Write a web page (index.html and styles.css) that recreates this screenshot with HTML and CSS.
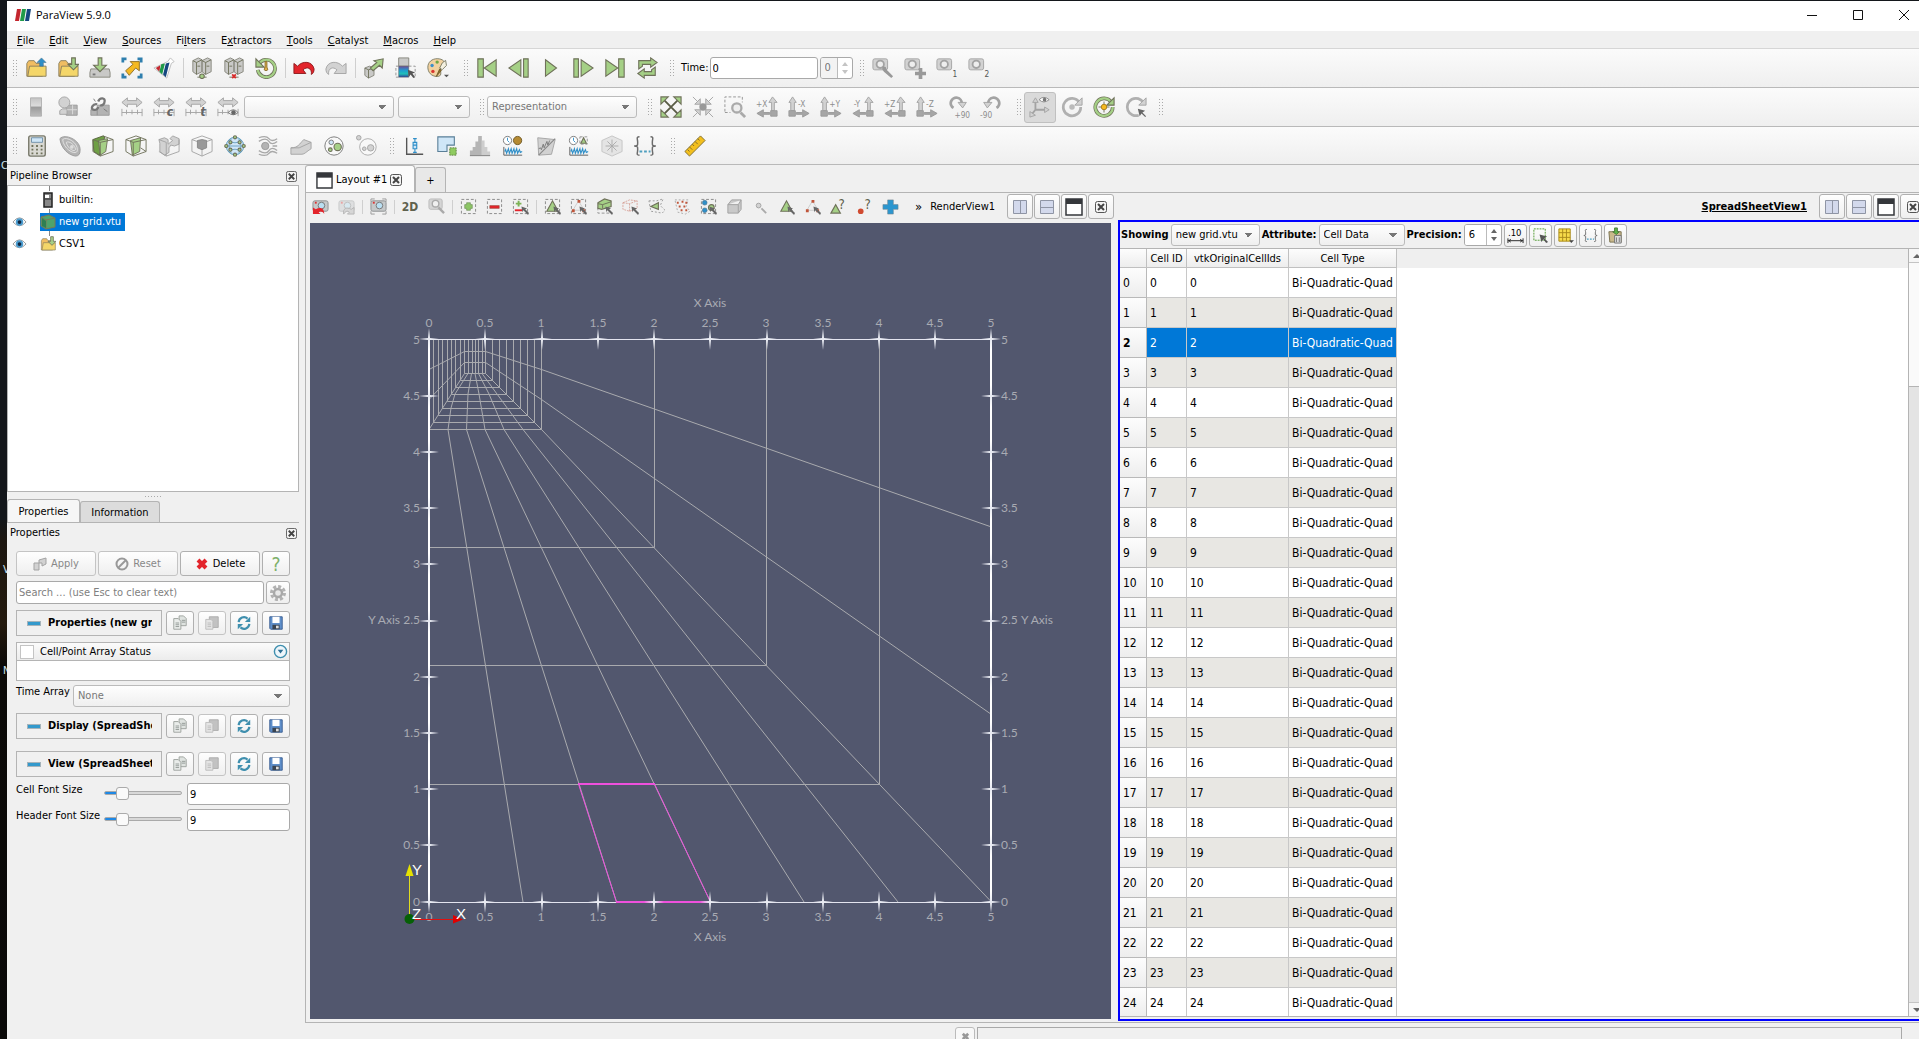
FILE: index.html
```html
<!DOCTYPE html>
<html lang="en">
<head>
<meta charset="utf-8">
<title>ParaView 5.9.0</title>
<link rel="stylesheet" href="styles.css">
</head>
<body>
<svg class="defs" aria-hidden="true">
  <defs>
    <linearGradient id="rainbow" x1="0" y1="0" x2="0" y2="1"><stop offset="0" stop-color="#6a4b9a"/><stop offset=".4" stop-color="#1f9fd0"/><stop offset=".7" stop-color="#1fc0b8"/><stop offset="1" stop-color="#2f3f9a"/></linearGradient>
    <linearGradient id="fade" x1="0" y1="0" x2="0" y2="1"><stop offset="0" stop-color="#c4c4c4"/><stop offset=".45" stop-color="#dcdcdc"/><stop offset=".5" stop-color="#9a9a9a"/><stop offset="1" stop-color="#bcbcbc"/></linearGradient>
    <path id="star" fill="#e9ebf3" d="M12 1L13 11 22 12 13 13 12 23 11 13 2 12 11 11z"/>
  </defs>
  <symbol id="logo" viewBox="0 0 16 14"><path fill="#c4262e" d="M2 1h4L4 13H0z"/><path fill="#1f9a49" d="M7 1h4L9 13H5z"/><path fill="#15477f" d="M12 1h4l-2 12h-4z"/></symbol>
  <symbol id="folder-up" viewBox="0 0 24 24"><path class="or" d="M2 21V7l2-3h6l2 3h7v14z"/><path class="yl" d="M5 10h18v11H3z"/><path class="bl" d="M18 1l5 5h-3v4h-4V6h-3z"/></symbol>
  <symbol id="folder-down" viewBox="0 0 24 24"><path class="or" d="M2 21V7l2-3h6l2 3h7v14z"/><path class="yl" d="M5 10h18v11H3z"/><path class="gn" d="M16 1h4v7h4l-6 6-6-6h4z"/></symbol>
  <symbol id="save" viewBox="0 0 24 24"><path class="gd" d="M2 13h20l1 4v5H1v-5z"/><path class="gn" d="M10 1h4v8h5l-7 7-7-7h5z"/><path fill="#777" d="M4 18h3v2H4z"/></symbol>
  <symbol id="extract-data" viewBox="0 0 24 24"><path class="cb" d="M2 6V2h4M18 2h4v4M22 18v4h-4M6 22H2v-4"/><path fill="#f5b921" stroke="#8a6d28" d="M5 15l8-7-3-3h10v10l-4-3-7 8z"/></symbol>
  <symbol id="flask" viewBox="0 0 24 24"><path fill="#fff" stroke="#bbb" d="M19 1l4 4-3 2-5 16L1 12l15-7z"/><path fill="#c4262e" d="M3 12l5-3-1 7z"/><path fill="#1f9a49" d="M9 8l4-1-3 12-3-3z"/><path fill="#15477f" d="M14 7l4-1-4 16-3-3z"/></symbol>
  <symbol id="server" viewBox="0 0 24 24"><path class="gd" d="M2 4l6-3 4 2v13l-6 3-4-3zM12 4l6-3 4 2v13l-6 3-4-3z"/><path class="ol" d="M2 4l4 2 6-3M6 6v13M12 4l4 2 6-3M16 6v13M7 10h3M17 10h3M7 22h10"/></symbol>
  <symbol id="connect" viewBox="0 0 24 24"><use href="#server"/><circle class="gn" cx="12" cy="21" r="2.500"/></symbol>
  <symbol id="disconnect" viewBox="0 0 24 24"><use href="#server"/><path stroke="#d92b2b" stroke-width="2" d="M10 19l4 4m0-4l-4 4"/></symbol>
  <symbol id="reset-session" viewBox="0 0 24 24"><path fill="none" stroke="#6f715a" stroke-width="4" d="M4 8a9.500 9.500 0 1 1-1 6"/><path fill="none" stroke="#a5d086" stroke-width="2.500" d="M4 8a9.500 9.500 0 1 1-1 6"/><path class="gn" d="M1 2v9h9z"/><path fill="#e0b04a" stroke="#8a6d28" d="M11 5h2v6l1 3-2 1-2-1 1-3z"/></symbol>
  <symbol id="undo" viewBox="0 0 24 24"><path fill="#e3242b" stroke="#8c1a1c" d="M1 18V7l4 3C10 4 21 4 23 13c0 3-1 5-3 6 1-7-5-9-9-5l3 4z"/></symbol>
  <symbol id="redo" viewBox="0 0 24 24"><path class="gy" d="M23 18V7l-4 3C14 4 3 4 1 13c0 3 1 5 3 6-1-7 5-9 9-5l-3 4z"/></symbol>
  <symbol id="extrude" viewBox="0 0 24 24"><path class="gd" d="M2 12l5-2 5 2v8l-6 3-4-3z"/><path class="ol" d="M2 12l4 2 6-2M6 14v9"/><path class="gn" d="M8 12l7-6-3-2 10-2-1 10-3-3-7 6z"/></symbol>
  <symbol id="color-map" viewBox="0 0 24 24"><path class="gd" d="M4 1h11v9H4z"/><path fill="url(#rainbow)" stroke="#555" stroke-width=".5" d="M4 10h11v12H4z"/><path class="ds" d="M4 22H1V10h3M15 10h7v12"/><path fill="#555" d="M14 14l8 3-3 1 3 4-2 1-3-4-2 3z"/></symbol>
  <symbol id="palette" viewBox="0 0 26 24"><path fill="#f2d2a0" stroke="#6f715a" d="M12 1c7 0 10 4 9 8-1 3-5 2-5 5s2 8-4 8C5 22 1 17 1 11 1 5 6 1 12 1z"/><circle fill="#d8352f" cx="7" cy="16" r="2"/><circle fill="#3f8fc9" cx="6" cy="9" r="2"/><circle fill="#70a844" cx="12" cy="5" r="2"/><path fill="#f4f0e0" stroke="#6f715a" d="M22 3l1 6-5 5-3-2 3-6z"/><path fill="#8a6d28" stroke="#6f5a28" d="M15 13l2 2-6 7z"/><path fill="#555" d="M20 20h6l-3 3z"/></symbol>
  <symbol id="first" viewBox="0 0 24 24"><path class="gn" d="M2 2h6v20H2zM22 3v18L9 12z"/></symbol>
  <symbol id="previous" viewBox="0 0 24 24"><path class="gn" d="M14 3v18L1 12zM17 2h5v20h-5z"/></symbol>
  <symbol id="play" viewBox="0 0 24 24"><path class="gn" d="M6 3l12 9L6 21z"/></symbol>
  <symbol id="next" viewBox="0 0 24 24"><path class="gn" d="M10 3v18l13-9zM2 2h5v20H2z"/></symbol>
  <symbol id="last" viewBox="0 0 24 24"><path class="gn" d="M2 3v18l13-9zM16 2h6v20h-6z"/></symbol>
  <symbol id="loop" viewBox="0 0 24 24"><path class="gn" d="M3 13V4h13V1l7 5-7 5V8H7v2zM21 11v9H9v3l-7-5 7-5v3h8v-2z"/></symbol>
  <symbol id="cam" viewBox="0 0 24 24"><rect class="gy" x="1" y="2" width="16" height="12" rx="2"/><circle fill="#eee" stroke="#a3a3a3" stroke-width="2" cx="9" cy="8" r="4"/></symbol>
  <symbol id="cam-tool" viewBox="0 0 24 24"><use href="#cam"/><path fill="#999" d="M12 10l3 1 1 3 7 7-2 2-8-7-2-3z"/></symbol>
  <symbol id="cam-add" viewBox="0 0 24 24"><use href="#cam"/><path fill="#999" d="M16 12h4v4h4v4h-4v4h-4v-4h-4v-4h4z"/></symbol>
  <symbol id="legend" viewBox="0 0 24 24"><path fill="url(#fade)" stroke="#b0b0b0" d="M6 2h12v20H6z"/></symbol>
  <symbol id="edit-colors" viewBox="0 0 24 24"><path class="gk" d="M10 10h12v11H10z"/><path class="gy" d="M6 14h5v6H3v-4z"/><circle class="gy" cx="8" cy="7" r="6"/><path stroke="#ddd" d="M17 10v10M11 15h11"/></symbol>
  <symbol id="unlink" viewBox="0 0 24 24"><path class="gk" d="M9 10h13v11H9zM2 15h7v6H2z"/><path fill="none" stroke="#777" stroke-width="2.500" d="M10 6c2-5 8-4 7 0 0 3-3 5-5 4M9 9c-5-1-8 5-4 6 3 1 5-2 5-3"/><path stroke="#777" d="M5 3l2 3M16 14l4 3"/></symbol>
  <symbol id="range" viewBox="0 0 24 24"><path class="gy" d="M1 7l6-5v3h10V2l6 5-6 5V9H7v3z"/><path class="gl" d="M1 14v8M6 15v5M12 15v5M18 15v5M23 14v8M1 18h22"/></symbol>
  <symbol id="range-v" viewBox="0 0 24 24"><use href="#range"/><path fill="#eee" stroke="#777" d="M12 18q6-6 11 0-5 5-11 0z"/><circle fill="#666" cx="18" cy="18" r="2.500"/></symbol>
  <symbol id="fit" viewBox="0 0 24 24"><path fill="none" stroke="#5a5c46" stroke-width="2" d="M4 4l16 16M20 4L4 20"/><path class="gn" d="M1 1h8L1 9zM23 1h-8l8 8zM1 23h8l-8-8zM23 23h-8l8-8z"/></symbol>
  <symbol id="fit-data" viewBox="0 0 24 24"><path class="gl" d="M1 1l5 5M23 1l-5 5M1 23l5-5M23 23l-5-5"/><path class="gy" d="M9 9V3L3 9zM15 9V3l6 6zM9 15v6l-6-6zM15 15v6l6-6z"/><circle fill="#999" cx="12" cy="12" r="4"/></symbol>
  <symbol id="zoom-box" viewBox="0 0 24 24"><path class="ds" d="M1 17V1h19v6M1 18h6"/><circle fill="#eee" stroke="#aaa" stroke-width="2.500" cx="14" cy="13" r="5"/><path stroke="#aaa" stroke-width="3" d="M18 18l5 5"/></symbol>
  <symbol id="ax-l" viewBox="0 0 24 24"><path class="gy" d="M17 16V7h-3l4-6 5 6h-3v9z"/><path fill="#a6a6a6" stroke="#999" d="M16 16h7v6h-7zM15 18H8v-3l-7 4 7 4v-3h7z"/></symbol>
  <symbol id="ax-r" viewBox="0 0 24 24"><path class="gy" d="M3 16V7H1l4-6 4 6H7v9z"/><path fill="#a6a6a6" stroke="#999" d="M1 16h7v6H1zM9 18h7v-3l7 4-7 4v-3H9z"/></symbol>
  <symbol id="rot-p" viewBox="0 0 24 24"><path fill="none" stroke="#a3a3a3" stroke-width="3" d="M6 13a6 6 0 1 1 9-5"/><path class="gy" d="M11 7h9l-4 6z"/></symbol>
  <symbol id="rot-m" viewBox="0 0 24 24"><path fill="none" stroke="#a3a3a3" stroke-width="3" d="M18 13a6 6 0 1 0-9-5"/><path class="gy" d="M13 7H4l4 6z"/></symbol>
  <symbol id="axes-eye" viewBox="0 0 24 24"><path fill="none" stroke="#a3a3a3" stroke-width="2" d="M7 15V5M7 15h11M7 15l-4 5"/><path class="gy" d="M4 7l3-5 3 5zM17 12l5 3-5 3zM1 17v6l6-2z"/><path fill="#fff" stroke="#888" d="M11 4q5-5 11 0-6 5-11 0z"/><circle fill="#777" cx="17" cy="4" r="2"/></symbol>
  <symbol id="center-show" viewBox="0 0 24 24"><path class="ring" d="M20 7a9.500 9.500 0 1 0 1.500 5"/><path class="gy" d="M23 2v8h-8z"/><circle fill="#bbb" cx="12" cy="12" r="3"/></symbol>
  <symbol id="center-reset" viewBox="0 0 24 24"><path fill="none" stroke="#6f715a" stroke-width="4" d="M20 7a9.500 9.500 0 1 0 1.500 5"/><path fill="none" stroke="#a5d086" stroke-width="2.500" d="M20 7a9.500 9.500 0 1 0 1.500 5"/><path class="gn" d="M23 2v8h-8z"/><path stroke="#6f715a" d="M12 6v12M6 12h12"/><circle fill="#f5b921" stroke="#a87d18" cx="12" cy="12" r="3"/></symbol>
  <symbol id="center-pick" viewBox="0 0 24 24"><path class="ring" d="M20 7a9.500 9.500 0 1 0-5 14"/><path class="gy" d="M23 2v8h-8z"/><path fill="#666" d="M14 14l8 2-3 2 4 4-1 1-4-4-2 3z"/></symbol>
  <symbol id="calc" viewBox="0 0 24 24"><rect fill="#d9d9d3" stroke="#77786a" stroke-width="1.500" x="3" y="1" width="18" height="22" rx="2"/><path fill="#cfe6f7" stroke="#6f8fa8" d="M6 3h12v5H6z"/><path stroke="#6f715a" stroke-width="2" stroke-dasharray="2 3" d="M6 12h12M6 16h12M6 20h12"/></symbol>
  <symbol id="contour" viewBox="0 0 24 24"><path class="gk" d="M1 4c5-6 23 1 22 13 0 4-2 6-5 6C10 22 2 14 1 4z"/><path fill="none" stroke="#e4e4e4" d="M4 5c4-4 17 3 16 12-1 6-15-1-16-12zM8 8c3-2 10 3 10 8-2 3-9-2-10-8z"/><circle fill="#ddd" cx="14" cy="13" r="2"/></symbol>
  <symbol id="clip" viewBox="0 0 24 24"><path fill="#6f9f45" stroke="#55623c" d="M1 5l11-4 2 1-6 20-6-4z"/><path fill="#a5d086" stroke="#6f715a" d="M7 6l10-2-2 14-6 4z"/><path class="ol" d="M1 5l8 3 14-3-11-4M9 8v15l14-5V5M9 23l-8-5V5"/></symbol>
  <symbol id="slice" viewBox="0 0 24 24"><path fill="#a5d086" stroke="#6f715a" d="M6 6l11-3-1 15-8 4z"/><path class="ol" d="M1 5l8 3 14-3-11-4zM9 8v15l14-5V5M9 23l-8-5V5M17 14l6 4"/></symbol>
  <symbol id="threshold" viewBox="0 0 24 24"><path class="gy" d="M1 5l6-2 4 2v5l5-4-3-2 3-3 7 3v6l-5 2-4-1-2 3v5l-5 3-5-4V9z"/><path class="gl" d="M1 18l8 5 14-5V5M9 8v15M1 5l8 3"/></symbol>
  <symbol id="subset" viewBox="0 0 24 24"><path class="gl" d="M12 1l11 4v13l-11 5-11-5V5zM1 5l11 4 11-4M12 9v14"/><path fill="#999" stroke="#888" d="M7 6l5-1 5 1v8l-5 2-5-2z"/></symbol>
  <symbol id="glyph" viewBox="0 0 24 24"><circle fill="#cfe6f7" stroke="#4f93b8" cx="12" cy="12" r="9.500"/><path fill="none" stroke="#6aa0c0" d="M2 12h20M5 6q7 5 14 0M5 18q7-5 14 0M8 4q-5 8 0 16M16 4q5 8 0 16"/><g class="gn"><circle cx="12" cy="2.500" r="1.700"/><circle cx="12" cy="21.500" r="1.700"/><circle cx="2.500" cy="12" r="1.700"/><circle cx="21.500" cy="12" r="1.700"/><circle cx="7" cy="8" r="1.700"/><circle cx="17" cy="8" r="1.700"/><circle cx="7" cy="16" r="1.700"/><circle cx="17" cy="16" r="1.700"/></g></symbol>
  <symbol id="stream" viewBox="0 0 24 24"><path fill="none" stroke="#a8a8a8" stroke-width="1.400" d="M2 3q8-3 11 1t9 0M2 7q8-5 11 0t9 0M17 12h5M2 17q8 5 11 0t9 0M2 21q8 3 11-1t9 0"/><circle class="gk" cx="9" cy="12" r="4"/></symbol>
  <symbol id="warp" viewBox="0 0 24 24"><path class="gy" d="M1 14c8 0 9-4 14-9l8 3v7c-5 3-7 6-10 6H1z"/><path class="gl" d="M1 14h9l13-6"/></symbol>
  <symbol id="group" viewBox="0 0 24 24"><circle fill="#f8f8f8" stroke="#777" cx="12" cy="12" r="10"/><circle fill="#cfe6f7" stroke="#777" cx="9" cy="8" r="2.500"/><circle class="gn" cx="16" cy="13" r="4"/><circle class="gn" cx="8" cy="16" r="2"/></symbol>
  <symbol id="level" viewBox="0 0 24 24"><circle fill="#f8f8f8" stroke="#aaa" cx="13" cy="13" r="9"/><circle class="gy" cx="3" cy="3" r="2.500"/><circle class="gy" cx="16" cy="14" r="3.500"/><circle class="gy" cx="9" cy="15" r="2"/></symbol>
  <symbol id="plot-data" viewBox="0 0 24 24"><path fill="none" stroke="#555" stroke-width="1.500" d="M4 3v18h18"/><path fill="#cfe6f7" stroke="#2f8fc8" stroke-width="1.200" d="M13 4v4m0 7v4M11 8h4v7h-4zM11 11h4M11 4h4M11 19h4"/></symbol>
  <symbol id="extract-sel" viewBox="0 0 24 24"><path fill="#cfe6f7" stroke="#5a7f98" stroke-width="1.200" d="M2 2h18v9h-8v7H2z"/><path fill="#8fcb60" stroke="#5c7f3f" stroke-dasharray="2 1" d="M15 14h7v8h-7z"/></symbol>
  <symbol id="histogram" viewBox="0 0 24 24"><path fill="#b5b5b5" d="M1 22v-5h3v-4h3V7h3V1h4v21z"/><path fill="#cdcdcd" d="M14 6h3v7h3v5h3v4h-9z"/><path stroke="#777" d="M1 22.500h22"/></symbol>
  <symbol id="wave" viewBox="0 0 24 24"><path fill="none" stroke="#555" d="M2 13v9h20"/><path fill="none" stroke="#2f8fc8" stroke-width="1.200" d="M3 18l1-2 1 4 2-5 1 5 2-5 1 5 2-5 1 5 2-5 1 5 2-4 1 3 2-1"/></symbol>
  <symbol id="plot-time" viewBox="0 0 24 24"><use href="#wave"/><circle fill="#fff" stroke="#777" cx="6" cy="6" r="4.500"/><path fill="none" stroke="#2f8fc8" d="M6 3v3l2 2"/><circle fill="#b58a32" stroke="#6f5a28" cx="17" cy="6" r="4.500"/></symbol>
  <symbol id="plot-line" viewBox="0 0 24 24"><path class="gy" d="M3 3l19 2-4 16-14 1z"/><path fill="none" stroke="#888" stroke-width="1.200" d="M4 22L22 4"/><path fill="none" stroke="#777" d="M4 15l2-1 1 2 2-6 1 4 3-7 1 4 2-5"/></symbol>
  <symbol id="plot-sel-time" viewBox="0 0 24 24"><use href="#wave"/><circle fill="#fff" stroke="#777" cx="6" cy="6" r="4.500"/><path fill="none" stroke="#2f8fc8" d="M6 3v3l2 2"/><path class="ds" d="M13 2h8v8h-8z"/><path class="gn" d="M14 9l3-6 3 6z"/></symbol>
  <symbol id="probe" viewBox="0 0 24 24"><path fill="#e4e4e4" stroke="#c4c4c4" d="M12 1l11 5v12l-11 5-11-5V6z"/><path stroke="#aaa" d="M12 5v14M5 12h14M7 7l10 10M17 7L7 17"/></symbol>
  <symbol id="braces" viewBox="0 0 24 24"><path fill="none" stroke="#6b6b6b" stroke-width="1.600" d="M6 2C2 2 4 4 4 8s0 3-3 4c3 1 3 0 3 4s-2 6 2 6M18 2c4 0 2 2 2 6s0 3 3 4c-3 1-3 0-3 4s2 6-2 6"/><path fill="#4f9fbf" d="M6 17h3v2H6zM11 17h3v2h-3zM16 17h2v2h-2z"/></symbol>
  <symbol id="ruler" viewBox="0 0 24 24"><path fill="#f3bf1d" stroke="#7d6a2a" d="M18 1l5 5L6 23l-5-5z"/><path stroke="#7d6a2a" d="M15 4l2 2M12 7l3 3M9 10l2 2M6 13l3 3M4 16l2 2"/></symbol>
  <symbol id="eye" viewBox="0 0 16 12"><path fill="#fff" stroke="#999" d="M1 6q7-9 14 0-7 8-14 0z"/><circle fill="#4b9ccf" cx="8" cy="6" r="4"/><circle fill="#0f2740" cx="8" cy="6" r="2"/></symbol>
  <symbol id="box-icon" viewBox="0 0 16 16"><path fill="#4fa36b" stroke="#7a7a55" d="M1 3l8-2 6 3v9l-9 2-5-3z"/><path fill="none" stroke="#7a7a55" d="M1 3l5 3 9-2M6 6v9"/><path fill="#2f7f52" d="M2 4l4 3v7l-4-2z"/></symbol>
  <symbol id="tower" viewBox="0 0 10 16"><path fill="#888" stroke="#222" stroke-width="1.500" d="M1 1h8v14H1z"/><path fill="#fff" d="M2 3h4v3H2z"/><path stroke="#222" d="M2 7h6"/></symbol>
  <symbol id="x-close" viewBox="0 0 12 12"><rect fill="#f4f4f4" stroke="#555" x=".5" y=".5" width="11" height="11" rx="2"/><path stroke="#444" stroke-width="2" d="M3 3l6 6m0-6L3 9"/></symbol>
  <symbol id="copy" viewBox="0 0 18 18"><path fill="#dfe3e0" stroke="#999f9b" d="M8 1h5l3 3v8H8z"/><path fill="#e9ecea" stroke="#999f9b" d="M2 4h5l3 3v9H2z"/><path stroke="#8d9590" d="M4 9h4M4 11h4M4 13h4M11 6h4M11 8h4"/></symbol>
  <symbol id="paste" viewBox="0 0 18 18"><path fill="#c2c2c2" stroke="#aaa" d="M6 2h10v12H6z"/><path fill="#e4e4e4" stroke="#bbb" d="M2 5h6l2 2v9H2z"/><path stroke="#bbb" d="M4 9h4M4 11h4M4 13h4"/></symbol>
  <symbol id="reload" viewBox="0 0 18 18"><path fill="none" stroke="#3f8fae" stroke-width="2.500" d="M3 8a6 6 0 0 1 10-4M15 10a6 6 0 0 1-10 4"/><path fill="#3f8fae" d="M16 2v6h-6zM2 16v-6h6z"/></symbol>
  <symbol id="disk" viewBox="0 0 18 18"><path fill="#5f8fca" stroke="#35598f" d="M2 2h14v14H3l-1-1z"/><path fill="#fff" d="M5 2h8v7H5z"/><path fill="#3a4450" d="M5 11h8v5H5z"/><path fill="#ddd" d="M9 12h3v3H9z"/></symbol>
  <symbol id="gear" viewBox="0 0 18 18"><circle fill="none" stroke="#b2b2b2" stroke-width="3" stroke-dasharray="3 2" cx="9" cy="9" r="6.500"/><circle fill="#e8e8e8" stroke="#a9a9a9" stroke-width="2.500" cx="9" cy="9" r="4"/></symbol>
  <symbol id="drop" viewBox="0 0 16 16"><circle fill="#eef6fb" stroke="#3f8fae" stroke-width="1.500" cx="8" cy="8" r="6.500"/><path fill="#2f6f94" d="M5 6h6l-3 4z"/></symbol>
  <symbol id="win" viewBox="0 0 18 18"><path fill="#fff" stroke="#35373b" stroke-width="1.500" d="M1 1h16v16H1z"/><path fill="#35373b" d="M1 1h16v5H1z"/></symbol>
  <symbol id="split-h" viewBox="0 0 16 16"><path fill="#d3d9ec" stroke="#8f95a5" d="M1.500 1.500h13v13h-13zM8.500 1.500v13"/></symbol>
  <symbol id="split-v" viewBox="0 0 16 16"><path fill="#d3d9ec" stroke="#8f95a5" d="M1.500 1.500h13v13h-13zM1.500 8.500h13"/></symbol>
  <symbol id="photo" viewBox="0 0 18 18"><rect fill="#c5c8c9" stroke="#8d9092" x="1" y="3" width="16" height="11" rx="2"/><circle fill="#b9dff2" stroke="#777" cx="10" cy="8" r="3.500"/><path fill="#d33" d="M3 4h2v2H3z"/></symbol>
  <symbol id="cam-undo" viewBox="0 0 18 18"><use href="#photo"/><path fill="#e3242b" d="M1 17V10l3 2c5-3 9-1 9 5-2-3-4-3-6-2l2 2z"/></symbol>
  <symbol id="cam-redo" viewBox="0 0 18 18"><g opacity=".4"><use href="#photo"/></g><path fill="#d6d6d6" stroke="#b5b5b5" d="M17 17V10l-3 2c-5-3-9-1-8 5 2-3 4-4 6-2l-2 2z"/></symbol>
  <symbol id="snap" viewBox="0 0 18 18"><use href="#photo"/><path fill="none" stroke="#999" d="M1 4V1h4M13 1h4v3M17 14v3h-4M5 17H1v-3"/></symbol>
  <symbol id="cam-zoom" viewBox="0 0 18 18"><rect fill="#d5d5d5" stroke="#bbb" x="1" y="1" width="14" height="11" rx="2"/><circle fill="#f0f0f0" stroke="#aaa" stroke-width="1.500" cx="8" cy="6" r="3.500"/><path stroke="#aaa" stroke-width="2.500" d="M11 10l6 6"/></symbol>
  <symbol id="marquee" viewBox="0 0 18 18"><path fill="none" stroke="#888" stroke-dasharray="3 2" d="M1.500 1.500h15v15h-15z"/></symbol>
  <symbol id="ptr" viewBox="0 0 18 18"><path fill="#666" d="M10 9l6 2-2 1 4 4-1 2-5-5-1 2z"/></symbol>
  <symbol id="sel-add" viewBox="0 0 18 18"><use href="#marquee"/><path fill="#8cc665" stroke="#6f8f5a" stroke-width=".7" d="M7 5h4v2h2v4h-2v2H7v-2H5V7h2z"/></symbol>
  <symbol id="sel-sub" viewBox="0 0 18 18"><use href="#marquee"/><path fill="#e3242b" stroke="#9c4a3a" stroke-width=".6" d="M4 8h10v3H4z"/></symbol>
  <symbol id="sel-tog" viewBox="0 0 18 18"><use href="#marquee"/><path fill="#7cb255" d="M6 3h2v2h2v2H8v2H6V7H4V5h2z"/><path fill="#e3242b" d="M3 12h8v2H3z"/><use href="#ptr"/></symbol>
  <symbol id="tri" viewBox="0 0 18 18"><path class="gn" d="M3 14L9 3l6 11z"/><use href="#ptr"/></symbol>
  <symbol id="tri-pts" viewBox="0 0 18 18"><path fill="none" stroke="#ccc" d="M3 13L9 3l6 10z"/><path fill="#c0553a" d="M8 2h3v3H8zM2 12h3v3H2zM13 12h3v3h-3z"/><use href="#ptr"/></symbol>
  <symbol id="sel-tri" viewBox="0 0 18 18"><use href="#marquee"/><use href="#tri"/></symbol>
  <symbol id="sel-pts" viewBox="0 0 18 18"><use href="#marquee"/><use href="#tri-pts"/></symbol>
  <symbol id="fr-cells" viewBox="0 0 18 18"><path class="ds" d="M2 10v6h13"/><path class="gn" d="M2 5l7-4 7 2v6L6 12l-4-1z"/><path class="ol" d="M2 6l5 1 9-3M7 7v4"/><use href="#ptr"/></symbol>
  <symbol id="fr-pts" viewBox="0 0 18 18"><path fill="none" stroke="#d8a59b" stroke-dasharray="2 1" d="M1 5l7-3 8 1v8l-8 3-7-2zM1 5l7 1 8-3M8 6v8"/><use href="#ptr"/></symbol>
  <symbol id="poly-cells" viewBox="0 0 18 18"><path fill="none" stroke="#999" stroke-dasharray="2 2" d="M1 3h8l7-2-3 7 5 5-3 3-12-2z"/><path class="gn" d="M3 9l8-4v7z"/></symbol>
  <symbol id="poly-pts" viewBox="0 0 18 18"><path fill="none" stroke="#aaa" stroke-dasharray="2 2" d="M1 2h14l-2 7 4 5-5 3-8-2z"/><path fill="#c0553a" d="M3 4h2v2H3zM8 3h2v2H8zM12 4h2v2h-2zM5 8h2v2H5zM10 8h2v2h-2zM7 12h2v2H7zM12 12h2v2h-2z"/></symbol>
  <symbol id="blocks" viewBox="0 0 18 18"><use href="#marquee"/><g class="bl"><circle cx="5" cy="5" r="2.500"/><circle cx="5" cy="13" r="2.500"/></g><circle class="gn" cx="12" cy="10" r="3"/><use href="#ptr"/></symbol>
  <symbol id="gray-box" viewBox="0 0 18 18"><path fill="#c9c9c9" stroke="#a0a0a0" d="M2 7l4-5h10v10l-3 4H2zM2 7h11l3-5M13 7v9"/></symbol>
  <symbol id="gray-pt" viewBox="0 0 18 18"><circle class="gy" cx="7" cy="8" r="2.500"/><path stroke="#aaa" stroke-width="2" d="M10 11l5 5"/></symbol>
  <symbol id="ask-cell" viewBox="0 0 18 18"><path class="gn" d="M1 16l5-9 5 9z"/></symbol>
  <symbol id="ask-pt" viewBox="0 0 18 18"><circle fill="#d04a30" cx="5" cy="14" r="3"/></symbol>
  <symbol id="plus" viewBox="0 0 18 18"><path fill="#2b96cf" stroke="#6f8490" stroke-width=".6" d="M6 2h6v5h5v5h-5v5H6v-5H1V7h5z"/></symbol>
  <symbol id="sel-only" viewBox="0 0 18 18"><path fill="none" stroke="#4f9a2f" stroke-dasharray="2 1" d="M2 2h12v12H2z"/><path fill="#555" d="M8 8l8 2-3 2 4 4-2 1-3-4-2 3z"/></symbol>
  <symbol id="cols" viewBox="0 0 18 18"><path fill="#f7dc4a" stroke="#a8891c" d="M2 2h12v13H2zM6 2v13M10 2v13M2 6h12M2 11h12"/><path fill="#444" d="M13 14h5l-3 3z"/></symbol>
  <symbol id="export" viewBox="0 0 18 18"><path fill="#c9b98c" stroke="#7a7250" d="M2 5h13v11H3z"/><path fill="#ddd" stroke="#777" d="M8 9h7v8H8zM10 11v5M13 11v5"/><path fill="#5cb34a" stroke="#4b7a3a" d="M8 1h3v4h2l-3 3-4-3h2z"/></symbol>
</svg>

<div class="desktop" aria-hidden="true"><span class="d1">C</span><span class="d2">V</span><span class="d3">N</span></div>

<div class="window">
  <header class="titlebar">
    <svg class="logo"><use href="#logo"/></svg><span class="title">ParaView 5.9.0</span>
    <div class="winbtns">
      <button aria-label="Minimize"><svg viewBox="0 0 12 12"><path d="M1 6.500h10"/></svg></button>
      <button aria-label="Maximize"><svg viewBox="0 0 12 12"><path d="M1.500 1.500h9v9h-9z"/></svg></button>
      <button aria-label="Close"><svg viewBox="0 0 12 12"><path d="M1 1l10 10M11 1L1 11"/></svg></button>
    </div>
  </header>
  <nav class="menu">
    <button><u>F</u>ile</button><button><u>E</u>dit</button><button><u>V</u>iew</button><button><u>S</u>ources</button><button>Fi<u>l</u>ters</button><button>E<u>x</u>tractors</button><button><u>T</u>ools</button><button><u>C</u>atalyst</button><button><u>M</u>acros</button><button><u>H</u>elp</button>
  </nav>

  <div class="bar bar-main">
    <i class="grip"></i>
    <button aria-label="Open"><svg><use href="#folder-up"/></svg></button>
    <button aria-label="Load state"><svg><use href="#folder-down"/></svg></button>
    <button aria-label="Save data"><svg><use href="#save"/></svg></button>
    <button aria-label="Save extracts"><svg><use href="#extract-data"/></svg></button>
    <button aria-label="Catalyst state"><svg><use href="#flask"/></svg></button>
    <i class="sep"></i>
    <button aria-label="Connect"><svg><use href="#connect"/></svg></button>
    <button aria-label="Disconnect"><svg><use href="#disconnect"/></svg></button>
    <button aria-label="Reset session"><svg><use href="#reset-session"/></svg></button>
    <i class="sep"></i>
    <button aria-label="Undo"><svg><use href="#undo"/></svg></button>
    <button aria-label="Redo"><svg><use href="#redo"/></svg></button>
    <i class="sep"></i>
    <button aria-label="Auto apply"><svg><use href="#extrude"/></svg></button>
    <button aria-label="Find data"><svg><use href="#color-map"/></svg></button>
    <button aria-label="Color palette"><svg><use href="#palette"/></svg></button>
    <i class="grip wide"></i>
    <button aria-label="First frame"><svg><use href="#first"/></svg></button>
    <button aria-label="Previous frame"><svg><use href="#previous"/></svg></button>
    <button aria-label="Play"><svg><use href="#play"/></svg></button>
    <button aria-label="Next frame"><svg><use href="#next"/></svg></button>
    <button aria-label="Last frame"><svg><use href="#last"/></svg></button>
    <button aria-label="Loop"><svg><use href="#loop"/></svg></button>
    <i class="grip"></i>
    <label class="tlabel" for="time">Time:</label><input class="field time" id="time" value="0">
    <span class="spin off"><input aria-label="Time step" value="0" disabled><i class="arrows"></i></span>
    <i class="grip"></i>
    <button aria-label="Adjust camera"><svg><use href="#cam-tool"/></svg></button>
    <button aria-label="Add camera"><svg><use href="#cam-add"/></svg></button>
    <button aria-label="Camera 1"><svg viewBox="0 0 24 24"><use href="#cam"/><text class="num" x="18" y="22">1</text></svg></button>
    <button aria-label="Camera 2"><svg viewBox="0 0 24 24"><use href="#cam"/><text class="num" x="18" y="22">2</text></svg></button>
  </div>

  <div class="bar">
    <i class="grip"></i>
    <button aria-label="Color legend"><svg><use href="#legend"/></svg></button>
    <button aria-label="Edit color map"><svg><use href="#edit-colors"/></svg></button>
    <button aria-label="Separate color map"><svg><use href="#unlink"/></svg></button>
    <button aria-label="Rescale to data"><svg><use href="#range"/></svg></button>
    <button aria-label="Rescale to custom"><svg viewBox="0 0 24 24"><use href="#range"/><text class="ital" x="15" y="22">c</text></svg></button>
    <button aria-label="Rescale over time"><svg viewBox="0 0 24 24"><use href="#range"/><text class="ital" x="17" y="22">t</text></svg></button>
    <button aria-label="Rescale to visible"><svg><use href="#range-v"/></svg></button>
    <select class="combo w150" aria-label="Color by" disabled><option></option></select>
    <select class="combo w72" aria-label="Component" disabled><option></option></select>
    <i class="grip wide"></i>
    <select class="combo w150" aria-label="Representation" disabled><option>Representation</option></select>
    <i class="grip"></i>
    <button aria-label="Reset camera"><svg><use href="#fit"/></svg></button>
    <button aria-label="Zoom to data"><svg><use href="#fit-data"/></svg></button>
    <button aria-label="Zoom to box"><svg><use href="#zoom-box"/></svg></button>
    <button aria-label="Plus X"><svg viewBox="0 0 24 24"><use href="#ax-l"/><text class="axt" x="0" y="12">+X</text></svg></button>
    <button aria-label="Minus X"><svg viewBox="0 0 24 24"><use href="#ax-r"/><text class="axt" x="11" y="12">-X</text></svg></button>
    <button aria-label="Plus Y"><svg viewBox="0 0 24 24"><use href="#ax-r"/><text class="axt" x="10" y="12">+Y</text></svg></button>
    <button aria-label="Minus Y"><svg viewBox="0 0 24 24"><use href="#ax-l"/><text class="axt" x="2" y="12">-Y</text></svg></button>
    <button aria-label="Plus Z"><svg viewBox="0 0 24 24"><use href="#ax-l"/><text class="axt" x="0" y="12">+Z</text></svg></button>
    <button aria-label="Minus Z"><svg viewBox="0 0 24 24"><use href="#ax-r"/><text class="axt" x="11" y="12">-Z</text></svg></button>
    <button aria-label="Rotate +90"><svg viewBox="0 0 24 24"><use href="#rot-p"/><text class="axt" x="7" y="24">+90</text></svg></button>
    <button aria-label="Rotate -90"><svg viewBox="0 0 24 24"><use href="#rot-m"/><text class="axt" x="0" y="24">-90</text></svg></button>
    <i class="grip wide"></i>
    <button class="pressed" aria-label="Show orientation axes"><svg><use href="#axes-eye"/></svg></button>
    <button aria-label="Show center"><svg><use href="#center-show"/></svg></button>
    <button aria-label="Reset center"><svg><use href="#center-reset"/></svg></button>
    <button aria-label="Pick center"><svg><use href="#center-pick"/></svg></button>
    <i class="grip"></i>
  </div>

  <div class="bar bar-filters">
    <i class="grip"></i>
    <button aria-label="Calculator"><svg><use href="#calc"/></svg></button>
    <button aria-label="Contour"><svg><use href="#contour"/></svg></button>
    <button aria-label="Clip"><svg><use href="#clip"/></svg></button>
    <button aria-label="Slice"><svg><use href="#slice"/></svg></button>
    <button aria-label="Threshold"><svg><use href="#threshold"/></svg></button>
    <button aria-label="Extract subset"><svg><use href="#subset"/></svg></button>
    <button aria-label="Glyph"><svg><use href="#glyph"/></svg></button>
    <button aria-label="Stream tracer"><svg><use href="#stream"/></svg></button>
    <button aria-label="Warp"><svg><use href="#warp"/></svg></button>
    <button aria-label="Group"><svg><use href="#group"/></svg></button>
    <button aria-label="Extract level"><svg><use href="#level"/></svg></button>
    <i class="grip"></i>
    <button aria-label="Plot data"><svg><use href="#plot-data"/></svg></button>
    <button aria-label="Extract selection"><svg><use href="#extract-sel"/></svg></button>
    <button aria-label="Histogram"><svg><use href="#histogram"/></svg></button>
    <button aria-label="Plot over time"><svg><use href="#plot-time"/></svg></button>
    <button aria-label="Plot over line"><svg><use href="#plot-line"/></svg></button>
    <button aria-label="Plot selection"><svg><use href="#plot-sel-time"/></svg></button>
    <button aria-label="Probe"><svg><use href="#probe"/></svg></button>
    <button aria-label="Programmable filter"><svg><use href="#braces"/></svg></button>
    <i class="grip wide"></i>
    <button class="ruler" aria-label="Ruler"><svg><use href="#ruler"/></svg></button>
  </div>

  <main class="main">
    <aside class="side">
      <div class="dock-title"><span>Pipeline Browser</span><button class="x" aria-label="Close pipeline"><svg><use href="#x-close"/></svg></button></div>
      <ul class="tree">
        <li><span class="vis"></span><span class="item root"><svg><use href="#tower"/></svg>builtin:</span></li>
        <li><span class="vis"><svg><use href="#eye"/></svg></span><span class="item selected"><svg><use href="#box-icon"/></svg>new grid.vtu</span></li>
        <li><span class="vis"><svg><use href="#eye"/></svg></span><span class="item"><svg><use href="#folder-down"/></svg>CSV1</span></li>
      </ul>
      <div class="dots"></div>
      <div class="tabs"><button class="tab on">Properties</button><button class="tab">Information</button></div>
      <div class="dock-title props"><span>Properties</span><button class="x" aria-label="Close properties"><svg><use href="#x-close"/></svg></button></div>
      <div class="form">
        <div class="row actions">
          <button class="btn" disabled><svg viewBox="0 0 14 14"><path class="gy" d="M1 6h5v7H1zM6 3l7-2v6l-4 2V6H6z"/></svg>Apply</button>
          <button class="btn" disabled><svg viewBox="0 0 14 14"><circle fill="none" stroke="#999" stroke-width="2" cx="7" cy="7" r="5.500"/><path stroke="#999" stroke-width="2" d="M3 11l8-8"/></svg>Reset</button>
          <button class="btn"><svg viewBox="0 0 14 14"><path stroke="#e3242b" stroke-width="4" d="M3 3l8 8m0-8l-8 8"/></svg>Delete</button>
          <button class="btn help" aria-label="Help">?</button>
        </div>
        <div class="row search">
          <input class="field" aria-label="Search" placeholder="Search ... (use Esc to clear text)"><button class="btn sm" aria-label="Advanced"><svg><use href="#gear"/></svg></button>
        </div>
        <div class="row sect">
          <button class="head"><i></i><span>Properties (new gr</span></button>
          <button class="btn" aria-label="Copy"><svg><use href="#copy"/></svg></button><button class="btn" aria-label="Paste" disabled><svg><use href="#paste"/></svg></button><button class="btn" aria-label="Reload"><svg><use href="#reload"/></svg></button><button class="btn" aria-label="Save"><svg><use href="#disk"/></svg></button>
        </div>
        <div class="arrays"><label><input type="checkbox">Cell/Point Array Status</label><svg><use href="#drop"/></svg></div>
        <div class="row timearr"><label for="tarr">Time Array</label><select class="combo" id="tarr" disabled><option>None</option></select></div>
        <div class="row sect">
          <button class="head"><i></i><span>Display (SpreadSheet)</span></button>
          <button class="btn" aria-label="Copy"><svg><use href="#copy"/></svg></button><button class="btn" aria-label="Paste" disabled><svg><use href="#paste"/></svg></button><button class="btn" aria-label="Reload"><svg><use href="#reload"/></svg></button><button class="btn" aria-label="Save"><svg><use href="#disk"/></svg></button>
        </div>
        <div class="row sect last">
          <button class="head"><i></i><span>View (SpreadSheet)</span></button>
          <button class="btn" aria-label="Copy"><svg><use href="#copy"/></svg></button><button class="btn" aria-label="Paste" disabled><svg><use href="#paste"/></svg></button><button class="btn" aria-label="Reload"><svg><use href="#reload"/></svg></button><button class="btn" aria-label="Save"><svg><use href="#disk"/></svg></button>
        </div>
        <div class="sizes">
          <label for="cf">Cell Font Size</label><input type="range" id="cf" min="4" max="33" value="9"><input class="field" aria-label="Cell font size value" value="9">
          <label for="hf">Header Font Size</label><input type="range" id="hf" min="4" max="33" value="9"><input class="field" aria-label="Header font size value" value="9">
        </div>
      </div>
    </aside>

    <section class="work">
      <div class="ltabs"><button class="ltab on"><svg class="w16"><use href="#win"/></svg>Layout #1<svg class="w11"><use href="#x-close"/></svg></button><button class="ltab add">+</button></div>
      <div class="frame">
        <section class="view">
          <div class="vbar">
            <button aria-label="Camera undo"><svg><use href="#cam-undo"/></svg></button>
            <button aria-label="Camera redo"><svg><use href="#cam-redo"/></svg></button>
            <i class="sep"></i>
            <button aria-label="Capture"><svg><use href="#snap"/></svg></button>
            <i class="sep"></i>
            <button class="twod">2D</button>
            <button aria-label="Adjust camera"><svg><use href="#cam-zoom"/></svg></button>
            <i class="sep"></i>
            <button aria-label="Add selection"><svg><use href="#sel-add"/></svg></button>
            <button aria-label="Subtract selection"><svg><use href="#sel-sub"/></svg></button>
            <button aria-label="Toggle selection"><svg><use href="#sel-tog"/></svg></button>
            <i class="sep"></i>
            <button aria-label="Select cells"><svg><use href="#sel-tri"/></svg></button>
            <button aria-label="Select points"><svg><use href="#sel-pts"/></svg></button>
            <button aria-label="Select cells through"><svg><use href="#fr-cells"/></svg></button>
            <button aria-label="Select points through"><svg><use href="#fr-pts"/></svg></button>
            <button aria-label="Polygon cells"><svg><use href="#poly-cells"/></svg></button>
            <button aria-label="Polygon points"><svg><use href="#poly-pts"/></svg></button>
            <button aria-label="Select block"><svg><use href="#blocks"/></svg></button>
            <button aria-label="Interactive data"><svg><use href="#gray-box"/></svg></button>
            <button aria-label="Interactive point data"><svg><use href="#gray-pt"/></svg></button>
            <button aria-label="Interactive cells"><svg><use href="#tri"/></svg></button>
            <button aria-label="Interactive points"><svg><use href="#tri-pts"/></svg></button>
            <button aria-label="Hover cells"><svg viewBox="0 0 18 18"><use href="#ask-cell"/><text class="ask" x="9" y="12">?</text></svg></button>
            <button aria-label="Hover points"><svg viewBox="0 0 18 18"><use href="#ask-pt"/><text class="ask" x="9" y="12">?</text></svg></button>
            <button aria-label="Grow selection"><svg><use href="#plus"/></svg></button>
            <span class="more">»</span>
            <span class="vname">RenderView1</span>
            <div class="vbtns"><button class="btn" aria-label="Split horizontal"><svg class="w14"><use href="#split-h"/></svg></button><button class="btn" aria-label="Split vertical"><svg class="w14"><use href="#split-v"/></svg></button><button class="btn" aria-label="Maximize view"><svg><use href="#win"/></svg></button><button class="btn" aria-label="Close view"><svg class="w11"><use href="#x-close"/></svg></button></div>
          </div>
          <svg class="canvas" viewBox="310 223 801 796" role="img" aria-label="Mesh view">
            <g class="mesh">
              <path d="M541.500 339.500V429.500H429M654.500 339.500V547.500H429M766.500 339.500V665.500H429M879.500 339.500V784.500H429"/>
              <path d="M448 429.500L523 902M466.500 429.500L616.500 902M485 429.500L710.500 902M504 429.500L804 902M523 429.500L898 902M541.500 429.500L991.500 902"/>
              <path d="M485.500 351.500L541.500 369.500L991.500 527M485.500 362.500L541.500 399.500L991.500 714.500M429 369.500L464.500 351.500H485.500M429 399.500L464.500 362.500H485.500"/>
              <path d="M464.500 339.500V373.500H485.500V339.500M460.500 339.500V380.500H492.500V339.500M455.500 339.500V387.500H499.500V339.500M451.500 339.500V394.500H506.500V339.500M447.500 339.500V401.500H513.500V339.500M442.500 339.500V408.500H520.500V339.500M438.500 339.500V415.500H527.500V339.500M433.500 339.500V422.500H534.500V339.500"/>
              <path d="M468.500 339.500V373.500M472.500 339.500V373.500M475.500 339.500V373.500M478.500 339.500V373.500M482.500 339.500V373.500"/>
              <path d="M464.500 373.500L429 429.500M468 373.500L455 394L451 408 448 429.500M471.500 373.500L468 394 466.500 429.500M475 373.500L479 394 485 429.500M478.500 373.500L489 394 504 429.500M482 373.500L497 394 523 429.500M485.500 373.500L541.500 429.500"/>
            </g>
            <path class="pick" d="M578.500 784L616.500 902M654.500 784L710.500 902"/>
            <path class="axis" d="M429 339.500H991.500M429 902.500H991.500"/><path class="axis bold" d="M429 339V903M991 339V903"/>
            <path class="pick thick" d="M578 784h77M616 902h94"/>
            <g>
              <use href="#star" x="417" y="327"/><use href="#star" x="473" y="327"/><use href="#star" x="530" y="327"/><use href="#star" x="586" y="327"/><use href="#star" x="642" y="327"/><use href="#star" x="698" y="327"/><use href="#star" x="755" y="327"/><use href="#star" x="811" y="327"/><use href="#star" x="867" y="327"/><use href="#star" x="923" y="327"/><use href="#star" x="979" y="327"/>
              <use href="#star" x="417" y="890"/><use href="#star" x="473" y="890"/><use href="#star" x="530" y="890"/><use href="#star" x="586" y="890"/><use href="#star" x="642" y="890"/><use href="#star" x="698" y="890"/><use href="#star" x="755" y="890"/><use href="#star" x="811" y="890"/><use href="#star" x="867" y="890"/><use href="#star" x="923" y="890"/><use href="#star" x="979" y="890"/>
              <use href="#star" x="417" y="384"/><use href="#star" x="417" y="440"/><use href="#star" x="417" y="496"/><use href="#star" x="417" y="552"/><use href="#star" x="417" y="609"/><use href="#star" x="417" y="665"/><use href="#star" x="417" y="721"/><use href="#star" x="417" y="777"/><use href="#star" x="417" y="833"/>
              <use href="#star" x="979" y="384"/><use href="#star" x="979" y="440"/><use href="#star" x="979" y="496"/><use href="#star" x="979" y="552"/><use href="#star" x="979" y="609"/><use href="#star" x="979" y="665"/><use href="#star" x="979" y="721"/><use href="#star" x="979" y="777"/><use href="#star" x="979" y="833"/>
            </g>
            <g class="lab mid">
              <text x="710" y="307">X Axis</text><text x="429" y="327">0</text><text x="485" y="327">0.5</text><text x="541" y="327">1</text><text x="598" y="327">1.5</text><text x="654" y="327">2</text><text x="710" y="327">2.5</text><text x="766" y="327">3</text><text x="823" y="327">3.5</text><text x="879" y="327">4</text><text x="935" y="327">4.5</text><text x="991" y="327">5</text>
              <text x="710" y="941">X Axis</text><text x="429" y="921">0</text><text x="485" y="921">0.5</text><text x="541" y="921">1</text><text x="598" y="921">1.5</text><text x="654" y="921">2</text><text x="710" y="921">2.5</text><text x="766" y="921">3</text><text x="823" y="921">3.5</text><text x="879" y="921">4</text><text x="935" y="921">4.5</text><text x="991" y="921">5</text>
            </g>
            <g class="lab end">
              <text x="420" y="344">5</text><text x="420" y="400">4.5</text><text x="420" y="456">4</text><text x="420" y="512">3.5</text><text x="420" y="568">3</text><text x="420" y="624">2.5</text><text x="420" y="681">2</text><text x="420" y="737">1.5</text><text x="420" y="793">1</text><text x="420" y="849">0.5</text><text x="420" y="906">0</text><text x="400" y="624">Y Axis</text>
            </g>
            <g class="lab">
              <text x="1001" y="344">5</text><text x="1001" y="400">4.5</text><text x="1001" y="456">4</text><text x="1001" y="512">3.5</text><text x="1001" y="568">3</text><text x="1001" y="624">2.5</text><text x="1001" y="681">2</text><text x="1001" y="737">1.5</text><text x="1001" y="793">1</text><text x="1001" y="849">0.5</text><text x="1001" y="906">0</text><text x="1021" y="624">Y Axis</text>
            </g>
            <path stroke="#e0dc20" d="M409.500 919V876"/><path fill="#e6e200" d="M409.500 864l4 12h-8z"/><path stroke="#e01010" d="M415 919.500h40"/><path fill="#e00000" d="M453 915l10 4.500-10 4z"/><circle fill="#066006" cx="409.500" cy="919" r="5"/>
            <g class="gizmo"><text x="412" y="875">Y</text><text x="412" y="919">Z</text><text x="456" y="919">X</text></g>
          </svg>
        </section>

        <section class="view sheet">
          <div class="vbar"><a class="vname cur" href="#sheet">SpreadSheetView1</a>
            <div class="vbtns"><button class="btn" aria-label="Split horizontal"><svg class="w14"><use href="#split-h"/></svg></button><button class="btn" aria-label="Split vertical"><svg class="w14"><use href="#split-v"/></svg></button><button class="btn" aria-label="Maximize view"><svg><use href="#win"/></svg></button><button class="btn" aria-label="Close view"><svg class="w11"><use href="#x-close"/></svg></button></div>
          </div>
          <div class="active" id="sheet">
            <div class="sbar">
              <label for="show">Showing</label><select class="combo w89" id="show"><option>new grid.vtu</option></select>
              <label for="attr">Attribute:</label><select class="combo w86" id="attr"><option>Cell Data</option></select>
              <label for="prec">Precision:</label><span class="spin"><input id="prec" value="6"><i class="arrows"></i></span>
              <button class="btn" aria-label="Fixed representation"><svg viewBox="0 0 18 18"><text class="ten" x="1" y="10">.10</text><path fill="none" stroke="#222" d="M1 12v5M17 12v5M1 14.500h16M4 13l-2 1.500 2 1.500M14 13l2 1.500-2 1.500"/></svg></button>
              <button class="btn" aria-label="Show only selected"><svg><use href="#sel-only"/></svg></button>
              <button class="btn" aria-label="Toggle columns"><svg><use href="#cols"/></svg></button>
              <button class="btn" aria-label="Toggle cell connectivity"><svg viewBox="-2 -2 28 28"><use href="#braces" width="24" height="24"/></svg></button>
              <button class="btn" aria-label="Export"><svg><use href="#export"/></svg></button>
            </div>
            <div class="gridwrap">
              <div class="scroll">
                <table>
                  <thead><tr><th></th><th>Cell ID</th><th>vtkOriginalCellIds</th><th>Cell Type</th></tr></thead>
                  <tbody>
                    <tr><th>0</th><td>0</td><td>0</td><td>Bi-Quadratic-Quad</td></tr>
                    <tr><th>1</th><td>1</td><td>1</td><td>Bi-Quadratic-Quad</td></tr>
                    <tr class="sel"><th>2</th><td>2</td><td>2</td><td>Bi-Quadratic-Quad</td></tr>
                    <tr><th>3</th><td>3</td><td>3</td><td>Bi-Quadratic-Quad</td></tr>
                    <tr><th>4</th><td>4</td><td>4</td><td>Bi-Quadratic-Quad</td></tr>
                    <tr><th>5</th><td>5</td><td>5</td><td>Bi-Quadratic-Quad</td></tr>
                    <tr><th>6</th><td>6</td><td>6</td><td>Bi-Quadratic-Quad</td></tr>
                    <tr><th>7</th><td>7</td><td>7</td><td>Bi-Quadratic-Quad</td></tr>
                    <tr><th>8</th><td>8</td><td>8</td><td>Bi-Quadratic-Quad</td></tr>
                    <tr><th>9</th><td>9</td><td>9</td><td>Bi-Quadratic-Quad</td></tr>
                    <tr><th>10</th><td>10</td><td>10</td><td>Bi-Quadratic-Quad</td></tr>
                    <tr><th>11</th><td>11</td><td>11</td><td>Bi-Quadratic-Quad</td></tr>
                    <tr><th>12</th><td>12</td><td>12</td><td>Bi-Quadratic-Quad</td></tr>
                    <tr><th>13</th><td>13</td><td>13</td><td>Bi-Quadratic-Quad</td></tr>
                    <tr><th>14</th><td>14</td><td>14</td><td>Bi-Quadratic-Quad</td></tr>
                    <tr><th>15</th><td>15</td><td>15</td><td>Bi-Quadratic-Quad</td></tr>
                    <tr><th>16</th><td>16</td><td>16</td><td>Bi-Quadratic-Quad</td></tr>
                    <tr><th>17</th><td>17</td><td>17</td><td>Bi-Quadratic-Quad</td></tr>
                    <tr><th>18</th><td>18</td><td>18</td><td>Bi-Quadratic-Quad</td></tr>
                    <tr><th>19</th><td>19</td><td>19</td><td>Bi-Quadratic-Quad</td></tr>
                    <tr><th>20</th><td>20</td><td>20</td><td>Bi-Quadratic-Quad</td></tr>
                    <tr><th>21</th><td>21</td><td>21</td><td>Bi-Quadratic-Quad</td></tr>
                    <tr><th>22</th><td>22</td><td>22</td><td>Bi-Quadratic-Quad</td></tr>
                    <tr><th>23</th><td>23</td><td>23</td><td>Bi-Quadratic-Quad</td></tr>
                    <tr><th>24</th><td>24</td><td>24</td><td>Bi-Quadratic-Quad</td></tr>
                  </tbody>
                </table>
              </div>
              <div class="sb" aria-hidden="true"><i class="up"></i><b></b><i class="down"></i></div>
            </div>
          </div>
        </section>
      </div>
    </section>
  </main>
  <footer class="status"><button aria-label="Abort"><svg viewBox="0 0 10 10"><path stroke="#999" stroke-width="3" d="M2 2l6 6m0-6L2 8"/></svg></button><div class="progress"></div></footer>
</div>
</body>
</html>
```
FILE: styles.css
```css
* { box-sizing: border-box; }
:root { --line: #b4b4b4; --bg: #f0f0f0; --blue: #0078d7; }
body { margin: 0; height: 100vh; overflow: hidden; display: flex; padding-top: 1px; background: #14171b; color: #000; font: 11px/14px "DejaVu Sans Condensed", "DejaVu Sans", sans-serif; }
button, input, select { font: inherit; color: inherit; margin: 0; }
button { padding: 0; border: 0; background: none; display: flex; align-items: center; justify-content: center; }
i { font-style: normal; }
.defs { position: absolute; width: 0; height: 0; }

/* icon paints */
.gn { fill: #a5d086; stroke: #6f715a; stroke-width: 1.2; }
.gy { fill: #d2d2d2; stroke: #a3a3a3; }
.gk { fill: #b3b3b3; stroke: #999; }
.gd { fill: #c9c9c7; stroke: #85867c; }
.gl { fill: none; stroke: #a3a3a3; }
.or { fill: #f0bd62; stroke: #8a7f5c; }
.yl { fill: #f4d669; stroke: #8a7f5c; }
.bl { fill: #2f8fc8; stroke: #4a6f88; stroke-width: .6; }
.cb { fill: none; stroke: #2f7fae; stroke-width: 3; }
.ol { fill: none; stroke: #6f715a; }
.ds { fill: none; stroke: #909090; stroke-dasharray: 3 2; }
.ring { fill: none; stroke: #b0b0b0; stroke-width: 3; }
.num { font-size: 9px; fill: #555; }
.axt { font-size: 9px; fill: #8d8d8d; }
.ital { font-size: 13px; font-style: italic; font-weight: bold; fill: #666; }
.ask { font-size: 14px; fill: #5f614d; }
.ten { font-size: 10px; }

/* strip of desktop beside the window */
.desktop { flex: none; width: 7px; position: relative; overflow: hidden; background: linear-gradient(#14171b 50%, #1c1610 52%, #241a0e 60%, #0c0a08 64%, #0a0908); color: #cfe4f2; }
.desktop span { position: absolute; left: 1px; }
.desktop .d1 { top: 158px; }
.desktop .d2 { top: 562px; left: 3px; }
.desktop .d3 { top: 663px; left: 3px; }
.window { flex: none; width: calc(100vw + 1px); display: flex; flex-direction: column; background: var(--bg); min-height: 0; }

.titlebar { height: 30px; flex: none; display: flex; align-items: center; background: #fff; padding: 0 0 2px 8px; font: 11px/16px "Open Sans", "Noto Sans", sans-serif; }
.logo { width: 16px; height: 14px; margin-right: 5px; }
.winbtns { margin-left: auto; display: flex; height: 100%; }
.winbtns button { width: 46px; }
.winbtns svg { width: 12px; height: 12px; fill: none; stroke: #111; }
.menu { height: 17px; flex: none; display: flex; gap: 1px; padding: 2px 0 0 3px; }
.menu button { padding: 0 7px; }

.bar { flex: none; height: 39px; display: flex; align-items: center; padding-left: 5px; background: linear-gradient(#fbfbfb, #efefef); border-bottom: 1px solid #b9b9b9; }
.bar-main { height: 40px; border-top: 1px solid #d6d6d6; }
.bar-filters { height: 38px; }
.bar button { flex: none; width: 32px; height: 31px; }
.bar-filters button { width: 33px; }
.bar button svg { width: 22px; height: 22px; overflow: visible; }
.bar button.pressed { background: #dadada; border: 1px solid #c0c0c0; border-radius: 3px; }
.grip { flex: none; width: 5px; height: 18px; margin: 0 3px 0 0; background: radial-gradient(circle, #aaa 30%, transparent 40%) 0 0 / 3px 3px; }
* + .grip { margin-left: 6px; }
* + .grip.wide { margin-left: 9px; }
.sep { flex: none; width: 1px; height: 20px; margin: 0 2px 0 3px; background: #cfcfcf; }
.tlabel { margin: 0 1px 0 4px; }
.field { height: 22px; border: 1px solid #a9a9a9; border-radius: 3px; background: #fff; padding: 0 2px; min-width: 0; outline: 0; }
.field::placeholder { color: #808080; opacity: 1; }
.time { width: 108px; }
.spin { display: flex; width: 33px; height: 22px; margin-left: 2px; border: 1px solid #a9a9a9; border-radius: 3px; background: #fff; overflow: hidden; }
.spin input { border: 0; border-right: 1px solid #bbb; min-width: 0; flex: 1; padding: 0 4px; background: #fff; outline: 0; }
.spin.off input { background: #f3f3f3; color: #777; }
.arrows { width: 14px; display: flex; flex-direction: column; align-items: center; justify-content: center; gap: 4px; }
.arrows::before, .arrows::after { content: ""; border: 3px solid transparent; }
.arrows::before { border-top: 0; border-bottom: 4px solid #666; }
.arrows::after { border-bottom: 0; border-top: 4px solid #666; }
.off .arrows::before { border-bottom-color: #c4c4c4; }
.off .arrows::after { border-top-color: #c4c4c4; }
.combo { appearance: none; height: 22px; border: 1px solid #bbb; border-radius: 3px; padding: 0 18px 0 4px; opacity: 1; color: #000; background: conic-gradient(from -45deg at 50% 100%, #777 90deg, transparent 0) right 7px center / 8px 4px no-repeat, linear-gradient(#fefefe, #efefef); }
.combo:disabled { color: #777; }
.w150 { width: 150px; margin-right: 4px; }
.w72 { width: 72px; }
.w89 { width: 89px; }
.w86 { width: 86px; }

.main { flex: 1; min-height: 0; display: grid; grid-template-columns: 298px 1fr; }
.side { min-width: 0; padding-right: 6px; }
.dock-title { height: 20px; display: flex; align-items: center; justify-content: space-between; padding: 2px 2px 0 3px; }
.x, .x svg { width: 11px; height: 11px; }
.tree { list-style: none; margin: 0; padding: 3px 0 0; height: 307px; background: linear-gradient(#888, #888) 41px 0 / 1px 50px no-repeat, #fff; border: 1px solid #b4b4b4; }
.tree li { display: flex; align-items: center; height: 22px; }
.vis { width: 32px; padding-left: 4px; display: flex; }
.vis svg { width: 15px; height: 12px; }
.item { display: flex; align-items: center; height: 18px; gap: 3px; padding-right: 4px; }
.item svg { width: 16px; height: 16px; }
.item.root { background: #fff; }
.item.selected { background: var(--blue); color: #fff; }
.dots { width: 18px; height: 8px; margin: 0 auto; background: radial-gradient(circle, #aaa 30%, transparent 40%) 0 3px / 3px 3px repeat-x; }
.tabs { display: flex; align-items: flex-end; height: 23px; border-bottom: 1px solid var(--line); }
.tab { height: 21px; width: 80px; background: #dcdcdc; border: 1px solid var(--line); border-bottom: 0; border-radius: 3px 3px 0 0; padding-top: 2px; }
.tab.on { height: 23px; width: 73px; background: #f6f6f6; }
.dock-title.props { padding-top: 0; }
.form { padding: 8px 9px 0 9px; }
.row { display: flex; gap: 2px; }
.btn { border: 1px solid #b0b0b0; border-radius: 3px; background: linear-gradient(#fefefe, #efefef); gap: 4px; flex: none; }
.btn:disabled { color: #888; border-color: #c4c4c4; }
.btn svg { width: 18px; height: 18px; }
.actions .btn { height: 25px; width: 80px; }
.actions .btn svg { width: 14px; height: 14px; }
.actions .btn.help { width: 28px; font-size: 19px; color: #7fb06a; }
.search { margin-top: 5px; }
.search .field { flex: 1; height: 23px; }
.search .btn { width: 24px; height: 23px; }
.sect { margin-top: 6px; gap: 4px; align-items: center; }
.sect .btn { width: 28px; height: 24px; }
.sect .btn svg { width: 16px; height: 16px; }
.head { width: 146px; height: 26px; border: 1px solid var(--line); padding: 0 9px 0 10px; justify-content: flex-start; gap: 7px; font-weight: bold; }
.head i { flex: none; width: 14px; height: 5px; background: #3399cc; border: 1px solid #a5b3ba; }
.head span { overflow: hidden; white-space: nowrap; }
.arrays { margin-top: 6px; height: 39px; border: 1px solid var(--line); background: linear-gradient(#fbfbfb, #ececec 17px, #b4b4b4 17px, #b4b4b4 18px, #fff 18px); display: flex; justify-content: space-between; }
.arrays label { display: flex; align-items: center; height: 17px; gap: 6px; }
.arrays input { appearance: none; margin: 0 0 0 3px; width: 14px; height: 14px; border: 1px solid #c4c4c4; background: #fff; }
.arrays svg { width: 15px; height: 15px; margin: 1px; }
.timearr { margin-top: 4px; gap: 3px; }
.timearr .combo { flex: 1; }
.sect.last { margin-top: 12px; }
.sizes { margin-top: 6px; display: grid; grid-template-columns: 84px 79px 103px; column-gap: 4px; row-gap: 4px; white-space: nowrap; }
.sizes input[type=range] { appearance: none; width: 78px; height: 4px; margin: 8px 0 10px; border-radius: 2px; border: 1px solid #aaa; background: linear-gradient(90deg, #1e88e5 16px, #d8d8d8 16px); }
.sizes input[type=range]::-webkit-slider-thumb { appearance: none; width: 13px; height: 13px; border: 1px solid #aaa; border-radius: 3px; background: #fafafa; }

.work { display: flex; flex-direction: column; min-width: 0; min-height: 0; }
.ltabs { display: flex; align-items: flex-end; height: 27px; flex: none; }
.ltab { height: 25px; border: 1px solid var(--line); border-bottom: 0; border-radius: 3px 3px 0 0; background: #e8e8e8; width: 31px; gap: 3px; padding-top: 2px; }
.ltab.on { height: 27px; width: 110px; background: #fbfbfb; justify-content: flex-start; padding-left: 10px; }
.w16 { width: 17px; height: 17px; }
svg.w11, .btn svg.w11 { width: 12px; height: 12px; }
.btn svg.w14 { width: 16px; height: 16px; }
.frame { flex: 1; min-height: 0; border: 1px solid var(--line); display: grid; grid-template-columns: 1fr 1fr; }
.view { min-width: 0; min-height: 0; display: flex; flex-direction: column; }
.vbar { flex: none; height: 27px; display: flex; align-items: center; padding: 0 2px 0 1px; }
.vbar > button { flex: none; width: 26px; height: 24px; }
.vbar > button svg { width: 17px; height: 17px; }
.vbar .sep { height: 14px; }
.vbar .twod { font-size: 12px; font-weight: bold; color: #5f614d; }
.more { margin: 0 8px 0 12px; font-size: 13px; }
.vbtns { display: flex; gap: 1px; margin-left: auto; }
.vbtns .btn { width: 26px; height: 25px; }
.canvas { flex: 1; min-height: 0; margin: 3px 5px 3px 4px; background: #52576e; }
.mesh { fill: none; stroke: #a9aaae; stroke-width: 1; }
.pick { stroke: #ee50dd; fill: none; }
.pick.thick { stroke-width: 2; }
.axis { stroke: #e3e4ef; fill: none; }
.axis.bold { stroke: #fff; stroke-width: 2; }
.lab { font: 12px Lato, "Liberation Sans", sans-serif; fill: #a9abb3; }
.lab.mid { text-anchor: middle; }
.lab.end { text-anchor: end; }
.gizmo { font: 15px "Liberation Sans", sans-serif; fill: #fff; }

.sheet .vbar { justify-content: flex-end; padding-right: 0; }
.cur { font-weight: bold; color: #000; margin-right: 12px; }
.sheet .vbtns { margin-left: 0; }
.active { flex: 1; min-height: 0; margin: 0 0 1px 2px; border: 2px solid #00f; display: flex; flex-direction: column; }
.sbar { flex: none; height: 26px; display: flex; align-items: center; gap: 2px; padding-left: 1px; }
.sbar label { font-weight: bold; }
.sbar .spin { width: 38px; margin-left: 0; }
.sbar .btn { width: 23px; height: 23px; }
.sbar .btn svg { width: 17px; height: 17px; }
.gridwrap { flex: 1; min-height: 0; display: flex; border: 1px solid var(--line); border-width: 1px 0; background: #fff; margin-bottom: 2px; }
.scroll { flex: 1; overflow: hidden; background: linear-gradient(#efefef 19px, #fff 19px); }
table { border-collapse: separate; border-spacing: 0; table-layout: fixed; width: 277px; font-size: 12px; }
th { font-weight: normal; text-align: left; padding: 0 3px; background: linear-gradient(#fdfdfd, #ededed); border: 1px solid #b9b9b9; border-width: 0 1px 1px 0; }
td { padding: 0 3px; height: 30px; border: 1px solid #c8c8c8; border-width: 0 1px 1px 0; white-space: nowrap; }
thead th { height: 19px; font-size: 11px; text-align: center; padding: 2px 0 0; border-color: #c0c0c0; white-space: nowrap; }
thead th:nth-child(1) { width: 27px; }
thead th:nth-child(2) { width: 40px; }
thead th:nth-child(3) { width: 102px; }
tbody tr:nth-child(even) td { background: #e8e7e3; }
tbody tr.sel td { background: var(--blue); color: #fff; }
tbody tr.sel th { font-weight: bold; }
.sb { width: 16px; display: flex; flex-direction: column; background: #e4e4e4; border-left: 1px solid var(--line); }
.sb b { height: 124px; background: #fafafa; border-bottom: 1px solid var(--line); }
.sb i { height: 14px; background: #f6f6f6; border: 1px solid #c4c4c4; border-width: 0 0 1px; display: flex; align-items: center; justify-content: center; }
.sb i::after { content: ""; border: 4px solid transparent; }
.sb .up::after { border-top: 0; border-bottom-color: #666; }
.sb .down { margin-top: auto; border-width: 1px 0 0; }
.sb .down::after { border-bottom: 0; border-top-color: #666; }

.status { flex: none; height: 16px; display: flex; align-items: flex-start; gap: 2px; padding: 4px 25px 0 49.4%; overflow: hidden; }
.status button { flex: none; width: 20px; height: 18px; border: 1px solid #bbb; border-radius: 3px; background: #f8f8f8; }
.status svg { width: 9px; height: 9px; }
.progress { flex: 1; height: 18px; border: 1px solid #a9a9a9; }
```
